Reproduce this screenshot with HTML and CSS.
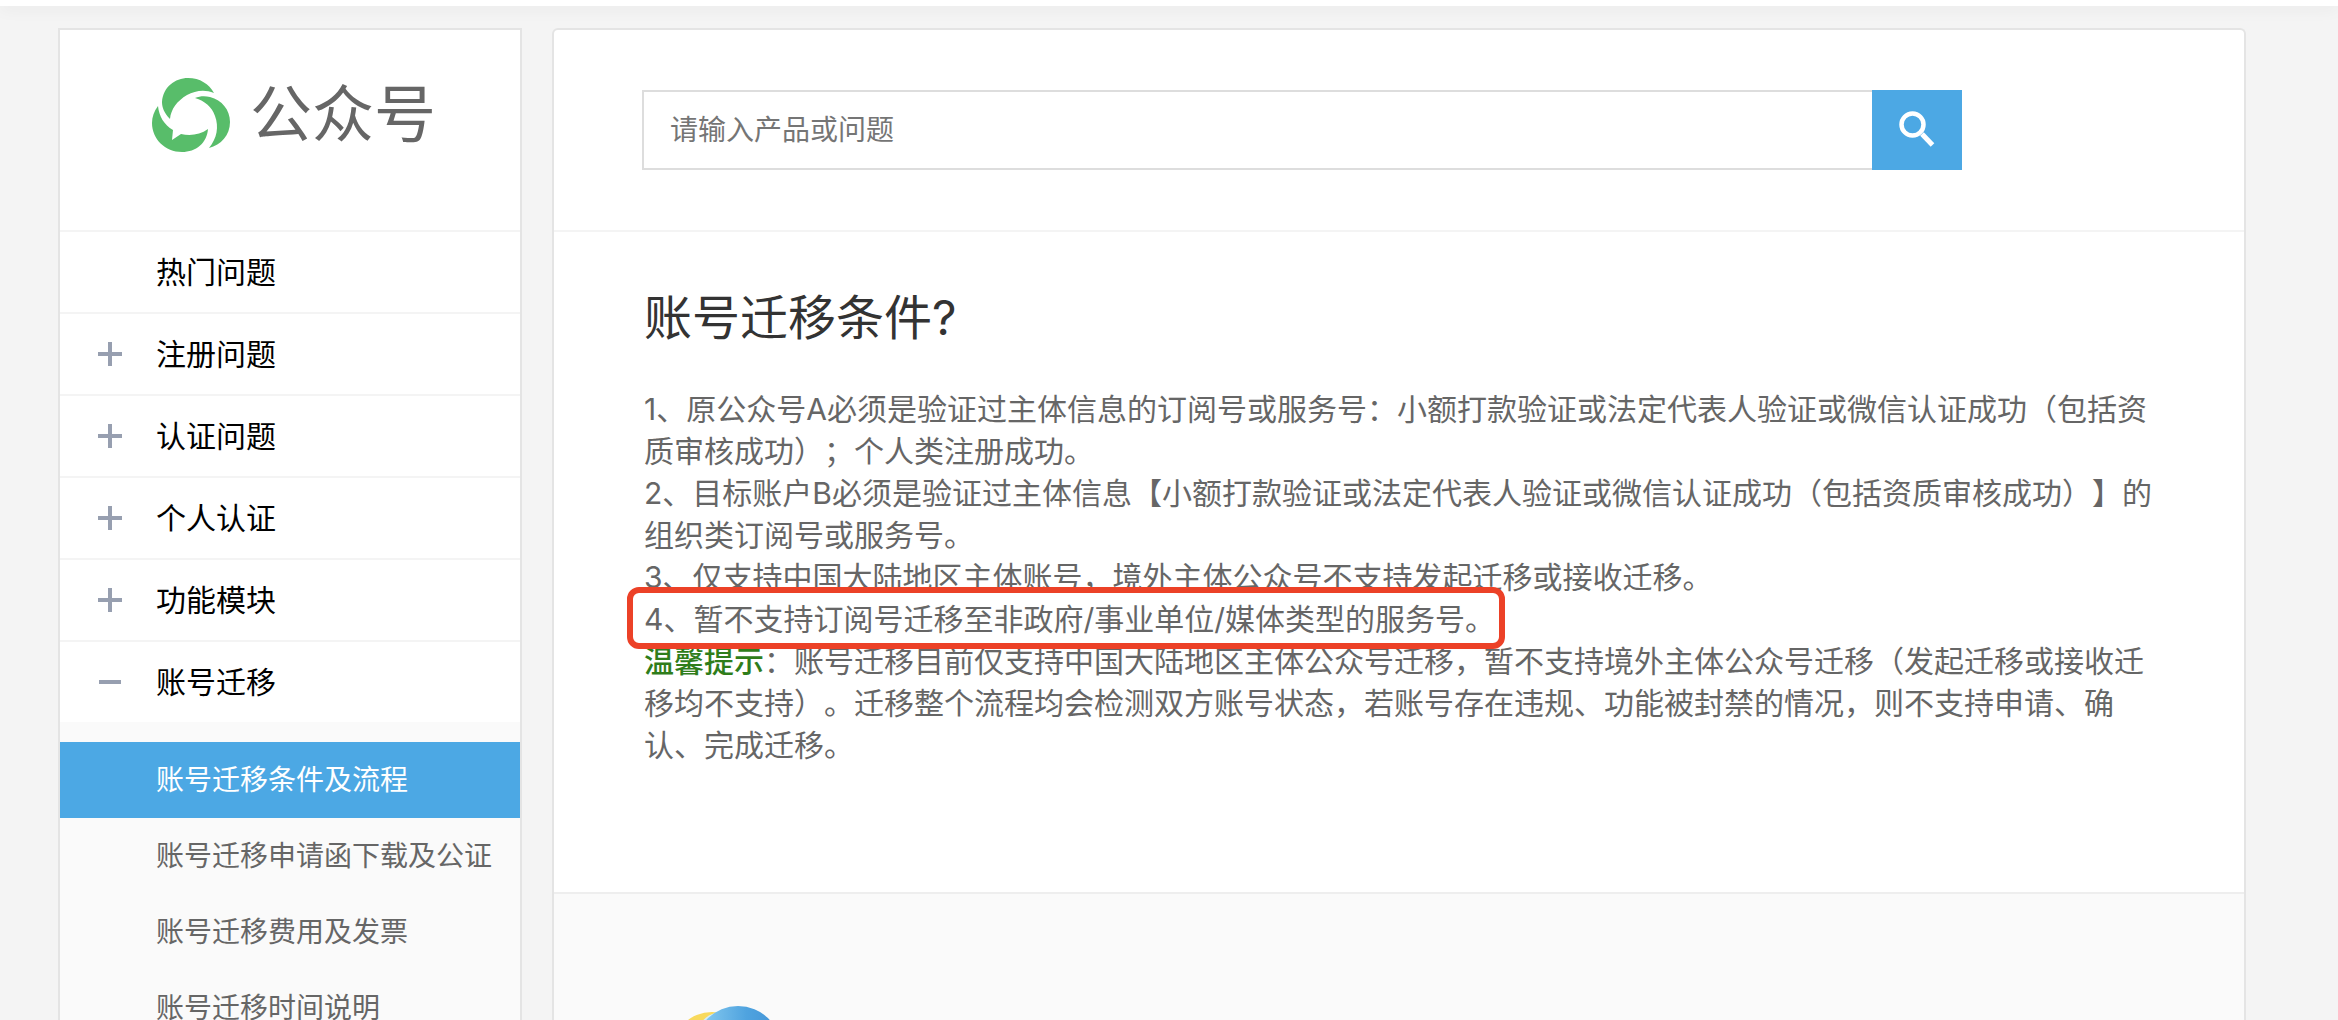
FILE: index.html
```html
<!DOCTYPE html>
<html lang="zh-CN">
<head>
  <meta charset="UTF-8">
  <meta name="viewport" content="width=device-width, initial-scale=1.0">
  <title>账号迁移条件</title>
  <link rel="stylesheet" href="styles.css">
</head>
<body>

<header class="topbar"></header>

<div class="page">
  <aside class="sidebar">
    <a class="logo" href="#">
      <svg class="logo-icon" viewBox="0 0 78 74" fill="#58bd6a" aria-hidden="true">
        <path d="M18 41C12 35 10 29 10 24C11 9 23 0 36 0C48 0 57 6 62 15C52 11 43 13 35 17C25 23 19 31 18 41Z"/>
        <path d="M43 20C48 18 53 18 58 19C70 22 78 32 78 44C78 57 69 67 57 70C65 60 67 49 63 38C60 29 53 23 43 20Z"/>
        <path d="M6 28C7 38 12 47 21 52L20 62L29 56C38 58 48 57 56 51C55 65 44 74 30 74C13 74 0 61 0 45C0 39 2 33 6 28Z"/>
      </svg>
      <span class="logo-text">公众号</span>
    </a>
    <nav>
      <ul class="menu">
        <li><a class="menu-item" href="#">热门问题</a></li>
        <li><a class="menu-item plus" href="#">注册问题</a></li>
        <li><a class="menu-item plus" href="#">认证问题</a></li>
        <li><a class="menu-item plus" href="#">个人认证</a></li>
        <li><a class="menu-item plus" href="#">功能模块</a></li>
        <li>
          <a class="menu-item minus" href="#">账号迁移</a>
          <ul class="submenu">
            <li><a class="active" href="#">账号迁移条件及流程</a></li>
            <li><a href="#">账号迁移申请函下载及公证</a></li>
            <li><a href="#">账号迁移费用及发票</a></li>
            <li><a href="#">账号迁移时间说明</a></li>
          </ul>
        </li>
      </ul>
    </nav>
  </aside>

  <main class="content">
    <form class="search">
      <input type="text" name="q" placeholder="请输入产品或问题" aria-label="请输入产品或问题">
      <button type="button" aria-label="搜索">
        <svg viewBox="0 0 36 36" fill="none" stroke="#fff" aria-hidden="true">
          <circle cx="13.5" cy="13.5" r="11" stroke-width="4.5"/>
          <path d="M23 23L33.5 34" stroke-width="5"/>
        </svg>
      </button>
    </form>

    <article class="article">
      <h1>账号迁移条件?</h1>
      <p>1、原公众号A必须是验证过主体信息的订阅号或服务号：小额打款验证或法定代表人验证或微信认证成功（包括资质审核成功）；个人类注册成功。</p>
      <p>2、目标账户B必须是验证过主体信息【小额打款验证或法定代表人验证或微信认证成功（包括资质审核成功）】的组织类订阅号或服务号。</p>
      <p>3、仅支持中国大陆地区主体账号，境外主体公众号不支持发起迁移或接收迁移。</p>
      <p><span class="marked">4、暂不支持订阅号迁移至非政府/事业单位/媒体类型的服务号。</span></p>
      <p><span class="tip">温馨提示</span>：账号迁移目前仅支持中国大陆地区主体公众号迁移，暂不支持境外主体公众号迁移（发起迁移或接收迁移均不支持）。迁移整个流程均会检测双方账号状态，若账号存在违规、功能被封禁的情况，则不支持申请、确认、完成迁移。</p>
    </article>

    <section class="support">
      <svg class="support-icon" viewBox="0 0 100 100" aria-hidden="true">
        <defs>
          <linearGradient id="blue" x1="0" y1="0" x2="1" y2="0">
            <stop offset="0" stop-color="#8fd0f2"/>
            <stop offset="0.6" stop-color="#4fa3df"/>
            <stop offset="1" stop-color="#4393d6"/>
          </linearGradient>
        </defs>
        <circle cx="28" cy="46" r="40" fill="#f8d95c"/>
        <path d="M16 18C22 10 28 7 36 6L50 16L26 36Z" fill="#d5ecf7"/>
        <circle cx="54" cy="43" r="43" fill="url(#blue)"/>
      </svg>
    </section>
  </main>
</div>

</body>
</html>
```
FILE: styles.css
```css
* { box-sizing: border-box; }
body {
  margin: 0;
  height: 100vh;
  display: flex;
  flex-direction: column;
  overflow: hidden;
  background: #f4f4f4;
  color: #666;
  font-family: Inter, "Noto Sans CJK SC", sans-serif;
  font-size: 30px;
  text-spacing-trim: space-all;
}
a { color: inherit; text-decoration: none; }
ul { list-style: none; margin: 0; padding: 0; }

.topbar {
  flex: none;
  height: 6px;
  background: #fff;
  box-shadow: 0 2px 16px rgba(0, 0, 0, 0.08);
}

.page {
  flex: 1;
  min-height: 0;
  display: flex;
  gap: 30px;
  padding: 22px 92px 0 58px;
}

/* sidebar */
.sidebar {
  flex: none;
  width: 464px;
  background: #fff;
  border: 2px solid #e4e4e4;
  border-bottom: none;
  overflow: hidden;
}
.logo {
  display: flex;
  align-items: center;
  gap: 20px;
  height: 200px;
  padding: 0 0 30px 92px;
}
.logo-icon { width: 78px; height: 74px; }
.logo-text { font-size: 62px; line-height: 76px; }
.menu-item {
  display: flex;
  align-items: center;
  height: 82px;
  padding-left: 96px;
  border-top: 2px solid #f4f4f4;
  color: #000;
  line-height: 40px;
}
.plus, .minus {
  padding-left: 38px;
  gap: 34px;
}
.plus::before, .minus::before {
  content: "";
  width: 24px;
  height: 24px;
  background: linear-gradient(#979fb0, #979fb0) center / 22px 4px no-repeat;
}
.plus::before {
  background:
    linear-gradient(#979fb0, #979fb0) center / 24px 4px no-repeat,
    linear-gradient(#979fb0, #979fb0) center / 4px 24px no-repeat;
}
.submenu {
  padding-top: 20px;
  background: #fafafa;
  font-size: 28px;
}
.submenu a {
  display: block;
  padding-left: 96px;
  line-height: 76px;
}
.submenu .active { background: #4ca8e4; color: #fff; }

/* content */
.content {
  flex: 1;
  display: flex;
  flex-direction: column;
  background: #fff;
  border: 2px solid #e4e4e4;
  border-bottom: none;
  border-radius: 6px 6px 0 0;
  overflow: hidden;
}
.search {
  display: flex;
  padding: 60px 88px;
  border-bottom: 2px solid #f4f4f4;
}
.search input {
  flex: 1;
  max-width: 1230px;
  height: 80px;
  padding: 0 26px;
  border: 2px solid #ddd;
  border-right: none;
  font: inherit;
  font-size: 28px;
}
.search input::placeholder { color: #757575; }
.search button {
  width: 90px;
  height: 80px;
  padding: 0;
  border: none;
  background: #4ca8e4;
  cursor: pointer;
}
.search svg { width: 36px; height: 36px; }

.article { padding: 50px 90px 126px; }
.article h1 {
  margin: 0 0 34px;
  color: #333;
  font-size: 48px;
  font-weight: normal;
  line-height: 72px;
}
.article p { margin: 0; line-height: 42px; }
.tip { color: #2f7d1a; font-weight: 500; }
.marked { position: relative; }
.marked::after {
  content: "";
  position: absolute;
  inset: -14px -10px -12px -17px;
  border: 6px solid #ec4127;
  border-radius: 12px;
}

.support {
  flex: 1;
  min-height: 0;
  padding: 112px 130px 0;
  background: #fafafa;
  border-top: 2px solid #eee;
}
.support-icon { display: block; width: 100px; height: 100px; }
```
